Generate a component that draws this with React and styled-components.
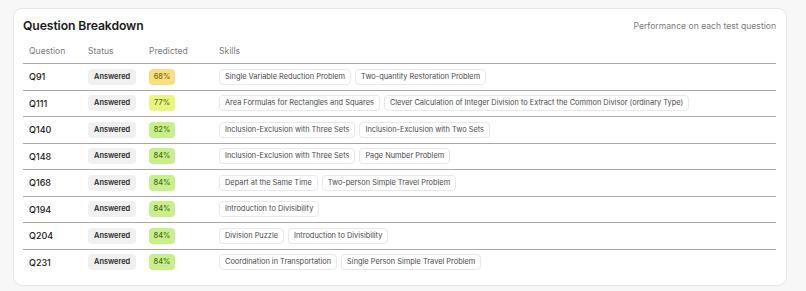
import React from 'react';
import styled, { createGlobalStyle } from 'styled-components';

const Global = createGlobalStyle`
  body {
    margin: 0;
    background: #f7f7f7;
    font-family: Inter, 'Noto Sans', sans-serif;
    color: #1a1a1a;
  }
`;

const Page = styled.div`
  padding: 8px 19px 8px 13px;
`;

const Card = styled.section`
  background: #fff;
  border: 1px solid #e6e6e6;
  border-radius: 9px;
  padding: 8px 10px 10px 9px;
`;

const Header = styled.div`
  display: flex;
  justify-content: space-between;
  align-items: center;
  height: 17px;
  margin-bottom: 5px;
`;

const Title = styled.h2`
  margin: 0;
  font-size: 12.2px;
  font-weight: 600;
  letter-spacing: -0.1px;
`;

const Subtitle = styled.span`
  font-size: 8.6px;
  color: #7a7a7a;
`;

const Table = styled.table`
  width: 100%;
  table-layout: fixed;
  border-collapse: collapse;
  font-size: 8.6px;
`;

const Th = styled.th`
  text-align: left;
  font-weight: 400;
  color: #7a7a7a;
  height: 24px;
  padding: 0 6px;
  width: ${(p) => p.$w || 'auto'};
  border-bottom: 1px solid #a8a8a8;
`;

const Tr = styled.tr`
  & + & td {
    border-top: 1px solid #a8a8a8;
  }
`;

const Td = styled.td`
  height: 25.5px;
  padding: 0 6px;
  vertical-align: middle;
  font-size: ${(p) => (p.$q ? '9px' : 'inherit')};
  font-weight: ${(p) => (p.$q ? 500 : 400)};
`;

const Status = styled.span`
  display: inline-block;
  background: #f0f0f0;
  color: #2a2a2a;
  font-size: 7.4px;
  font-weight: 600;
  line-height: 16px;
  padding: 0 6px;
  border-radius: 4px;
`;

const tones = {
  low: ['#f6e07f', '#7a6416'],
  mid: ['#e9f57e', '#5f6b12'],
  high: ['#c8f08a', '#46691a'],
};

const Score = styled.span`
  display: inline-block;
  background: ${(p) => tones[p.$tone][0]};
  color: ${(p) => tones[p.$tone][1]};
  font-size: 7.4px;
  font-weight: 500;
  line-height: 16px;
  width: 26px;
  text-align: center;
  border-radius: 4px;
`;

const Skills = styled.div`
  display: flex;
  gap: 4px;
`;

const Skill = styled.span`
  font-size: 7.4px;
  color: #4a4a4a;
  line-height: 14px;
  padding: 0 5px;
  border: 1px solid #e8e8e8;
  border-radius: 4px;
  white-space: nowrap;
`;

const rows = [
  ['Q91', 68, ['Single Variable Reduction Problem', 'Two-quantity Restoration Problem']],
  ['Q111', 77, ['Area Formulas for Rectangles and Squares', 'Clever Calculation of Integer Division to Extract the Common Divisor (ordinary Type)']],
  ['Q140', 82, ['Inclusion-Exclusion with Three Sets', 'Inclusion-Exclusion with Two Sets']],
  ['Q148', 84, ['Inclusion-Exclusion with Three Sets', 'Page Number Problem']],
  ['Q168', 84, ['Depart at the Same Time', 'Two-person Simple Travel Problem']],
  ['Q194', 84, ['Introduction to Divisibility']],
  ['Q204', 84, ['Division Puzzle', 'Introduction to Divisibility']],
  ['Q231', 84, ['Coordination in Transportation', 'Single Person Simple Travel Problem']],
];

const toneOf = (v) => (v < 70 ? 'low' : v < 80 ? 'mid' : 'high');

export default function App() {
  return (
    <>
      <Global />
      <Page>
        <Card>
          <Header>
            <Title>Question Breakdown</Title>
            <Subtitle>Performance on each test question</Subtitle>
          </Header>
          <Table>
            <thead>
              <tr>
                <Th $w="47px">Question</Th>
                <Th $w="49px">Status</Th>
                <Th $w="58px">Predicted</Th>
                <Th>Skills</Th>
              </tr>
            </thead>
            <tbody>
              {rows.map(([q, v, skills]) => (
                <Tr key={q}>
                  <Td $q>{q}</Td>
                  <Td><Status>Answered</Status></Td>
                  <Td><Score $tone={toneOf(v)}>{v}%</Score></Td>
                  <Td>
                    <Skills>
                      {skills.map((s) => <Skill key={s}>{s}</Skill>)}
                    </Skills>
                  </Td>
                </Tr>
              ))}
            </tbody>
          </Table>
        </Card>
      </Page>
    </>
  );
}
